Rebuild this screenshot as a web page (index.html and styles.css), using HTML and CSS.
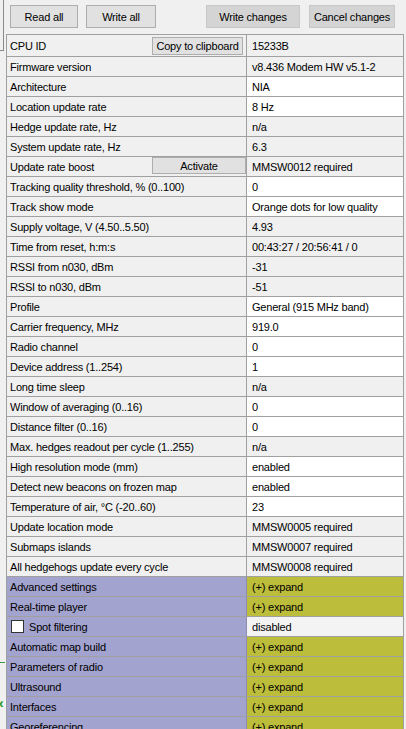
FILE: index.html
```html
<!DOCTYPE html>
<html lang="en">
<head>
    <meta charset="utf-8">
    <title>Modem settings</title>
    <link rel="stylesheet" href="styles.css">
</head>
<body>
    <div class="side">
        <div class="side-panel"></div>
        <div class="side-line"></div>
        <div class="side-arrow">&lsaquo;</div>
    </div>

    <div class="main">
        <div class="toolbar">
            <button class="btn btn-read">Read all</button>
            <button class="btn btn-write">Write all</button>
            <button class="btn btn-dark btn-changes">Write changes</button>
            <button class="btn btn-dark btn-cancel">Cancel changes</button>
        </div>

        <div class="grid">
            <div class="row first">
                <div class="name">CPU ID <button class="cell-btn copy">Copy to clipboard</button></div>
                <div class="value">15233B</div>
            </div>
            <div class="row"><div class="name">Firmware version</div><div class="value">v8.436 Modem HW v5.1-2</div></div>
            <div class="row"><div class="name">Architecture</div><div class="value edit">NIA</div></div>
            <div class="row"><div class="name">Location update rate</div><div class="value edit">8 Hz</div></div>
            <div class="row"><div class="name">Hedge update rate, Hz</div><div class="value">n/a</div></div>
            <div class="row"><div class="name">System update rate, Hz</div><div class="value">6.3</div></div>
            <div class="row">
                <div class="name">Update rate boost <button class="cell-btn activate">Activate</button></div>
                <div class="value">MMSW0012 required</div>
            </div>
            <div class="row"><div class="name">Tracking quality threshold, % (0..100)</div><div class="value edit">0</div></div>
            <div class="row"><div class="name">Track show mode</div><div class="value edit">Orange dots for low quality</div></div>
            <div class="row"><div class="name">Supply voltage, V (4.50..5.50)</div><div class="value">4.93</div></div>
            <div class="row"><div class="name">Time from reset, h:m:s</div><div class="value">00:43:27 / 20:56:41 / 0</div></div>
            <div class="row"><div class="name">RSSI from n030, dBm</div><div class="value">-31</div></div>
            <div class="row"><div class="name">RSSI to n030, dBm</div><div class="value">-51</div></div>
            <div class="row"><div class="name">Profile</div><div class="value edit">General (915 MHz band)</div></div>
            <div class="row"><div class="name">Carrier frequency, MHz</div><div class="value edit">919.0</div></div>
            <div class="row"><div class="name">Radio channel</div><div class="value edit">0</div></div>
            <div class="row"><div class="name">Device address (1..254)</div><div class="value edit">1</div></div>
            <div class="row"><div class="name">Long time sleep</div><div class="value">n/a</div></div>
            <div class="row"><div class="name">Window of averaging (0..16)</div><div class="value edit">0</div></div>
            <div class="row"><div class="name">Distance filter (0..16)</div><div class="value edit">0</div></div>
            <div class="row"><div class="name">Max. hedges readout per cycle (1..255)</div><div class="value">n/a</div></div>
            <div class="row"><div class="name">High resolution mode (mm)</div><div class="value edit">enabled</div></div>
            <div class="row"><div class="name">Detect new beacons on frozen map</div><div class="value edit">enabled</div></div>
            <div class="row"><div class="name">Temperature of air, &deg;C (-20..60)</div><div class="value edit">23</div></div>
            <div class="row"><div class="name">Update location mode</div><div class="value">MMSW0005 required</div></div>
            <div class="row"><div class="name">Submaps islands</div><div class="value">MMSW0007 required</div></div>
            <div class="row"><div class="name">All hedgehogs update every cycle</div><div class="value">MMSW0008 required</div></div>

            <!-- collapsible sections -->
            <div class="row group"><div class="name">Advanced settings</div><div class="value">(+) expand</div></div>
            <div class="row group"><div class="name">Real-time player</div><div class="value">(+) expand</div></div>
            <div class="row group option">
                <div class="name"><span class="check"></span>Spot filtering</div>
                <div class="value">disabled</div>
            </div>
            <div class="row group"><div class="name">Automatic map build</div><div class="value">(+) expand</div></div>
            <div class="row group"><div class="name">Parameters of radio</div><div class="value">(+) expand</div></div>
            <div class="row group"><div class="name">Ultrasound</div><div class="value">(+) expand</div></div>
            <div class="row group"><div class="name">Interfaces</div><div class="value">(+) expand</div></div>
            <div class="row group"><div class="name">Georeferencing</div><div class="value">(+) expand</div></div>
        </div>
    </div>
</body>
</html>
```

FILE: styles.css
```css
* {
    margin: 0;
    padding: 0;
    box-sizing: border-box;
}

body {
    font-family: "Liberation Sans", Arial, sans-serif;
    font-size: 11px;
    letter-spacing: -0.2px;
    color: #000;
    background: #f0f0f0;
    display: flex;
    height: 729px;
    overflow: hidden;
}

/* strip of the neighbouring panel on the left */
.side {
    width: 6px;
    flex-shrink: 0;
}

.side-panel {
    width: 4px;
    height: 51px;
    border-right: 1px solid #8a8a8a;
    border-bottom: 1px solid #8a8a8a;
}

.side-line {
    width: 5px;
    height: 1px;
    margin-top: 611px;
    background: #3c9a3c;
}

.side-arrow {
    margin-top: 35px;
    margin-left: -1px;
    color: #1e9a1e;
    font-size: 14px;
    font-weight: bold;
    line-height: 10px;
}

.main {
    width: 398px;
}

.toolbar {
    height: 34px;
    display: flex;
    align-items: flex-start;
    padding: 5px 0 0 4px;
}

.btn {
    height: 23px;
    font-family: inherit;
    font-size: 11px;
    letter-spacing: -0.2px;
    background: #e1e1e1;
    border: 1px solid #adadad;
    color: #000;
}

.btn-read {
    width: 68px;
}

.btn-write {
    width: 70px;
    margin-left: 8px;
}

.btn-dark {
    background: #d4d4d4;
    border-color: #c8c8c8;
}

.btn-changes {
    width: 94px;
    margin-left: 50px;
}

.btn-cancel {
    width: 86px;
    margin-left: 9px;
}

.grid {
    border: 1px solid #a0a0a0;
}

.row {
    display: flex;
    height: 20px;
    border-bottom: 1px solid #a0a0a0;
}

.row.first {
    height: 22px;
}

.name {
    width: 240px;
    flex-shrink: 0;
    display: flex;
    align-items: center;
    justify-content: space-between;
    padding-left: 3px;
    border-right: 1px solid #a0a0a0;
    background: #f0f0f0;
    white-space: nowrap;
}

.value {
    flex: 1;
    display: flex;
    align-items: center;
    padding-left: 5px;
    background: #f0f0f0;
    white-space: nowrap;
}

.value.edit {
    background: #fff;
}

.cell-btn {
    font-family: inherit;
    font-size: 11px;
    letter-spacing: -0.2px;
    background: #e1e1e1;
    border: 1px solid #adadad;
    color: #000;
}

.copy {
    width: 91px;
    height: 18px;
    margin-right: 3px;
}

.activate {
    width: 94px;
    height: 17px;
    margin-bottom: 2px;
}

.group .name {
    background: #a3a3cf;
    border-right-color: #8c8cb4;
}

.group .value {
    background: #bdbd3c;
}

.group.option .value {
    background: #f3f3f3;
}

.check {
    width: 13px;
    height: 13px;
    margin: 0 5px 0 1px;
    background: #fff;
    border: 1px solid #333;
}

.option .name {
    justify-content: flex-start;
}
```
